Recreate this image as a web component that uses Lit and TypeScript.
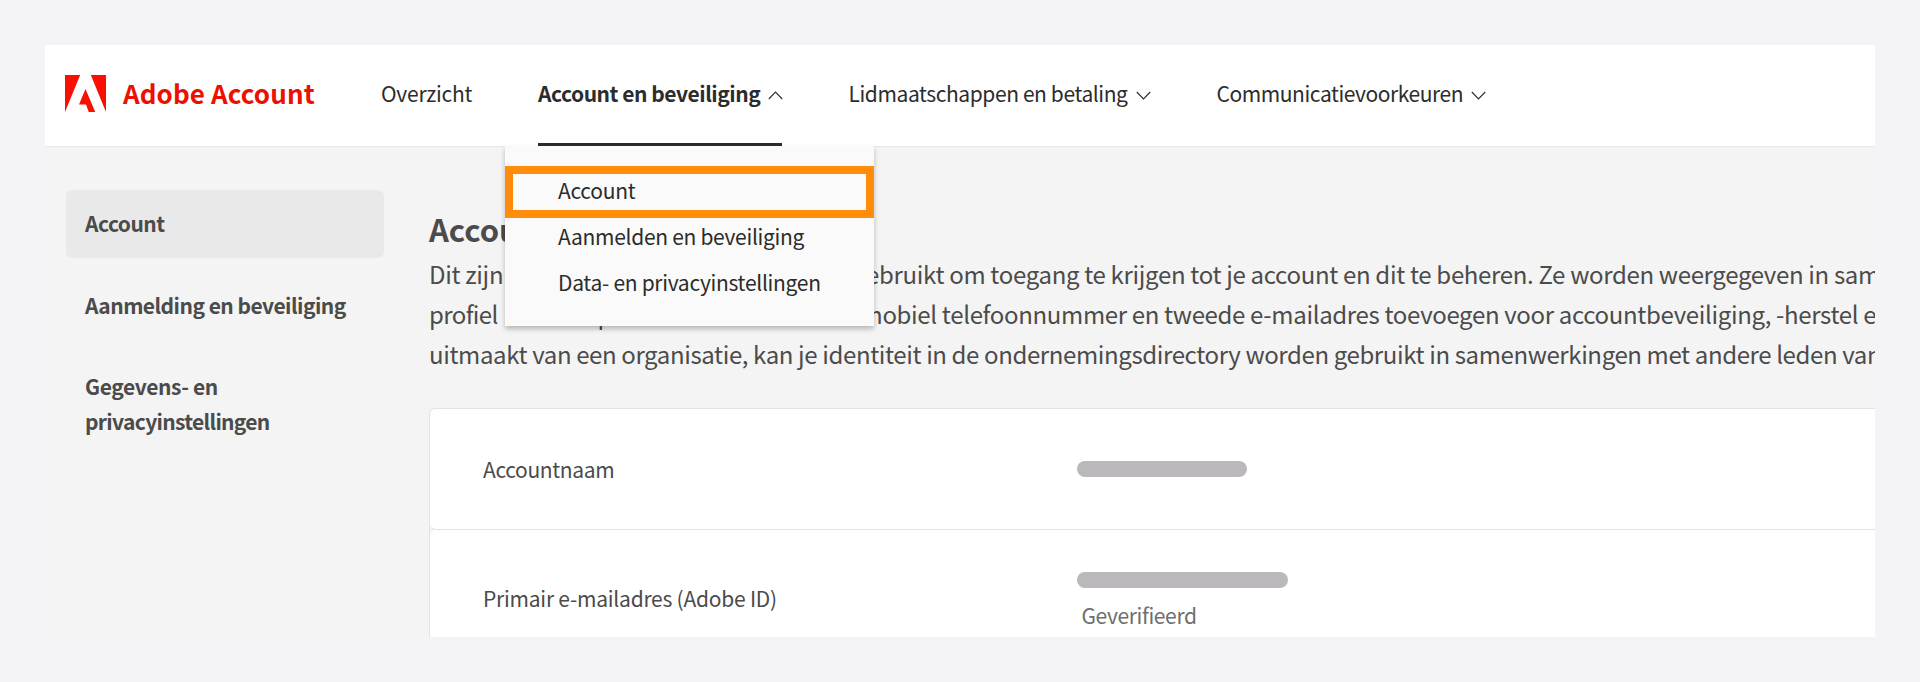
import { LitElement, html, css } from "lit";
import { customElement } from "lit/decorators.js";

const chevron = (up: boolean) => html`<svg class="chev" width="15" height="9" viewBox="0 0 15 9" fill="none" stroke="#2c2c2c" stroke-width="1.1">
  <path d=${up ? "M.8 8 7.5 1l6.7 7" : "M.8 1l6.7 7 6.7-7"} />
</svg>`;

@customElement("app-root")
export class AppRoot extends LitElement {
  static styles = css`
    :host {
      display: block;
      box-sizing: border-box;
      height: 682px;
      padding: 45px 45px;
      overflow: hidden;
      background: #f4f3f6;
      color: #4b4b4b;
      font: 400 21px/30px "Noto Sans CJK SC", "Noto Sans", sans-serif;
      white-space: nowrap;
    }
    .frame { height: 592px; background: #f4f4f4; overflow: hidden; display: flex; flex-direction: column; }
    header { height: 101px; flex: none; background: #fff; border-bottom: 1px solid #e6e6e6; display: flex; padding-left: 20px; color: #2c2c2c; }
    .brand { display: flex; width: 316px; color: #eb1000; font-size: 26px; font-weight: 700; letter-spacing: 0.1px; }
    .brand svg { margin: 30px 17px 0 0; flex: none; }
    .brand span { margin-top: 33px; }
    nav { display: flex; }
    .item { box-sizing: border-box; height: 101px; padding-top: 33px; display: flex; position: relative; }
    .chev { margin: 13px 0 0 8px; flex: none; }
    .on { border-bottom: 3px solid #2c2c2c; font-weight: 700; letter-spacing: -0.46px; }
    .w1 { width: 157px; letter-spacing: -0.22px; }
    .w2 { width: 244px; margin-right: 66.5px; }
    .w3 { width: 368px; letter-spacing: -0.41px; }
    .w4 { letter-spacing: -0.43px; }
    .menu { position: absolute; z-index: 2; left: -33px; top: 101px; width: 369px; height: 180px; box-sizing: border-box; padding-top: 20px; background: #fafafa; box-shadow: 0 3px 5px rgba(0, 0, 0, 0.25); font-weight: 400; letter-spacing: -0.3px; }
    .menu div { height: 46px; box-sizing: border-box; padding: 3px 0 0 53px; }
    .menu .hot { height: 52px; border: 8px solid #ff8c0a; padding: 1px 0 0 45px; }
    .body { display: flex; flex: 1; }
    aside { width: 318px; padding: 43px 45px 0 21px; flex: none; font-weight: 700; letter-spacing: -0.53px; }
    .side { box-sizing: border-box; padding: 16px 0 0 19px; line-height: 35px; height: 68px; margin-bottom: 14px; border-radius: 6px; }
    .side:last-child { padding-top: 15px; letter-spacing: -0.4px; }
    .sel { background: #e9e9e9; letter-spacing: -0.5px; }
    .side .tight { letter-spacing: -0.68px; }
    main { width: 1460px; flex: none; padding-top: 62px; }
    h1 { margin: 0 0 5px; font-size: 31px; line-height: 40px; }
    .text { font-size: 24px; line-height: 40px; letter-spacing: -0.32px; }
    .line { display: grid; grid-template-columns: 74px 363px auto; }
    .second { grid-template-columns: 74px 357.5px auto; letter-spacing: -0.335px; }
    .second span:first-child { letter-spacing: -0.6px; }
    .last { letter-spacing: -0.38px; }
    .end { text-align: right; }
    .gap { padding-left: 6px; }
    .card { margin-top: 34px; border: 1px solid #e2e2e2; border-radius: 6px 0 0; letter-spacing: -0.36px; }
    .row { height: 120px; background: #fff; border-radius: 6px 0 0 6px; border-bottom: 1px solid #e2e2e2; display: grid; grid-template-columns: 594px 1fr; padding-left: 53px; }
    .label { padding-top: 45px; }
    .bar { height: 16px; border-radius: 8px; background: #bab8bb; margin: 52px 0 0; width: 170px; }
    .row2 .label { padding-top: 53px; letter-spacing: -0.23px; }
    .row2 .bar { width: 211px; margin-top: 42px; }
    .ok { margin: 12px 0 0 4.5px; color: #6e6e6e; }
  `;

  render() {
    return html`<div class="frame">
      <header>
        <div class="brand">
          <svg width="41" height="37" viewBox="0 0 24 21.6" fill="#fa0f00"><path d="M0 0h8.9L0 21.6zM15.1 0H24v21.6zM12 8.1l5.7 13.5h-3.8L12.3 17.2H8.2z" /></svg>
          <span>Adobe Account</span>
        </div>
        <nav>
          <div class="item w1">Overzicht</div>
          <div class="item on w2"><span>Account en beveiliging</span>${chevron(true)}
            <div class="menu">
              <div class="hot">Account</div>
              <div>Aanmelden en beveiliging</div>
              <div>Data- en privacyinstellingen</div>
            </div>
          </div>
          <div class="item w3"><span>Lidmaatschappen en betaling</span>${chevron(false)}</div>
          <div class="item w4"><span>Communicatievoorkeuren</span>${chevron(false)}</div>
        </nav>
      </header>
      <div class="body">
        <aside>
          <div class="side sel">Account</div>
          <div class="side">Aanmelding en beveiliging</div>
          <div class="side">Gegevens- en<br /><span class="tight">privacyinstellingen</span></div>
        </aside>
        <main>
          <h1>Account</h1>
          <div class="text">
            <div class="line"><span>Dit zijn</span><span class="end">de gegevens die worden g</span><span>ebruikt om toegang te krijgen tot je account en dit te beheren. Ze worden weergegeven in sam</span></div>
            <div class="line second"><span>profiel</span><span class="gap">en toon profielen. U kunt een</span><span>mobiel telefoonnummer en tweede e-mailadres toevoegen voor accountbeveiliging, -herstel e</span></div>
            <div class="last">uitmaakt van een organisatie, kan je identiteit in de ondernemingsdirectory worden gebruikt in samenwerkingen met andere leden van</div>
          </div>
          <div class="card">
            <div class="row"><div class="label">Accountnaam</div><div class="bar"></div></div>
            <div class="row row2"><div class="label">Primair e-mailadres (Adobe ID)</div><div><div class="bar"></div><div class="ok">Geverifieerd</div></div></div>
          </div>
        </main>
      </div>
    </div>`;
  }
}
